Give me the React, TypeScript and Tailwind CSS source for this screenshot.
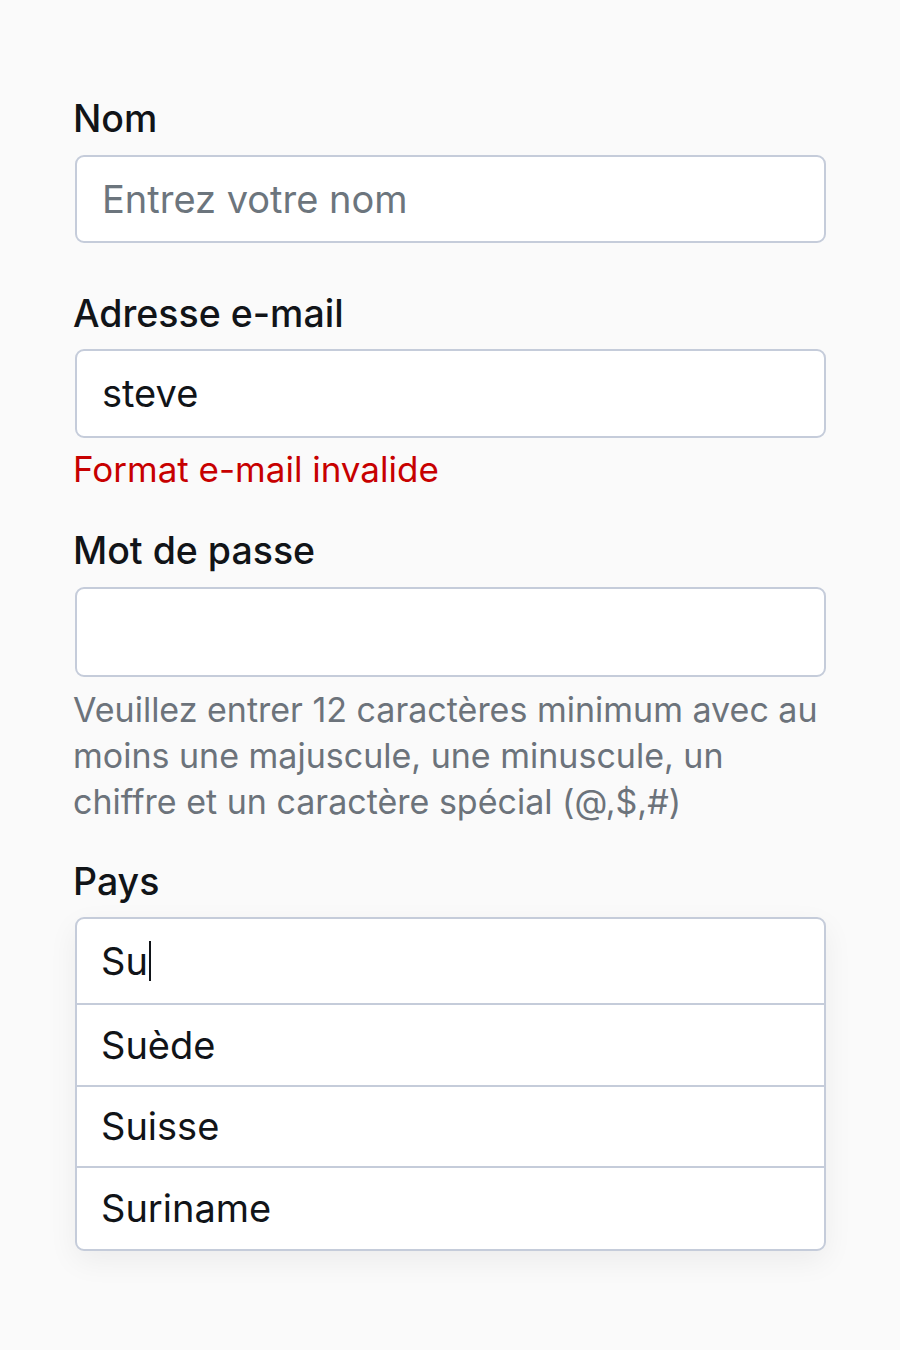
import React from "react";

const font = { fontFamily: "Inter, 'Noto Sans', sans-serif" };

export default function App() {
  return (
    <div className="min-h-[1350px] w-[900px] bg-[#fafafa] px-[75px] pt-[99px]" style={font}>
      <div className="flex w-[751px] flex-col">
        <label className="mb-[16px] -ml-[2px] h-[40px] text-[37.5px] font-medium leading-[40px] text-[#111418]">Nom</label>
        <div className="flex h-[88px] items-center rounded-[9px] border-2 border-[#c5ccda] bg-white pl-[25px] text-[38px] text-[#6c757d]">
          Entrez votre nom
        </div>

        <label className="mb-[15px] -ml-[2px] mt-[51px] h-[40px] text-[37.5px] font-medium leading-[40px] text-[#111418]">Adresse e-mail</label>
        <div className="flex h-[89px] items-center rounded-[9px] border-2 border-[#c5ccda] bg-white pl-[25px] text-[38px] text-[#111418]">
          steve
        </div>
        <div className="mt-[11px] -ml-[2px] h-[40px] text-[35px] leading-[40px] text-[#c70000]">Format e-mail invalide</div>

        <label className="mb-[16px] -ml-[2px] mt-[42px] h-[40px] text-[37.5px] font-medium leading-[40px] text-[#111418]">Mot de passe</label>
        <div className="h-[90px] rounded-[9px] border-2 border-[#c5ccda] bg-white" />
        <p className="mt-[10px] -ml-[2px] text-[34px] leading-[46px] text-[#6c737b]">
          Veuillez entrer 12 caractères minimum avec au moins une majuscule, une minuscule, un chiffre et un caractère spécial (@,$,#)
        </p>

        <label className="mb-[15px] -ml-[2px] mt-[37px] h-[40px] text-[37.5px] font-medium leading-[40px] text-[#111418]">Pays</label>
        <div className="overflow-hidden rounded-[9px] border-2 border-[#c5ccda] bg-white shadow-[0_10px_30px_rgba(0,0,0,0.06)]">
          <div className="flex h-[86px] items-center border-b-2 border-[#c5ccda] pl-[24px] text-[38px] text-[#111418]">
            Su<span className="ml-[1px] inline-block h-[40px] w-[2px] bg-[#111418]" />
          </div>
          <div className="flex h-[82px] items-center border-b-2 border-[#c5ccda] pl-[24px] text-[38px] text-[#111418]">Suède</div>
          <div className="flex h-[81px] items-center border-b-2 border-[#c5ccda] pl-[24px] text-[38px] text-[#111418]">Suisse</div>
          <div className="flex h-[81px] items-center pl-[24px] text-[38px] text-[#111418]">Suriname</div>
        </div>
      </div>
    </div>
  );
}
